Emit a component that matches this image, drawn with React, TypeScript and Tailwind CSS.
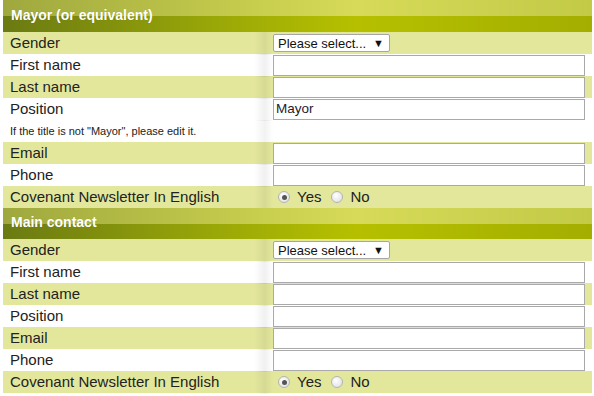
import React from "react"

type Row =
  | { kind: "select"; label: string }
  | { kind: "text"; label: string; value?: string }
  | { kind: "note"; text: string }
  | { kind: "radio"; label: string }

const mayorRows: Row[] = [
  { kind: "select", label: "Gender" },
  { kind: "text", label: "First name" },
  { kind: "text", label: "Last name" },
  { kind: "text", label: "Position", value: "Mayor" },
  { kind: "note", text: 'If the title is not "Mayor", please edit it.' },
  { kind: "text", label: "Email" },
  { kind: "text", label: "Phone" },
  { kind: "radio", label: "Covenant Newsletter In English" },
]

const contactRows: Row[] = [
  { kind: "select", label: "Gender" },
  { kind: "text", label: "First name" },
  { kind: "text", label: "Last name" },
  { kind: "text", label: "Position" },
  { kind: "text", label: "Email" },
  { kind: "text", label: "Phone" },
  { kind: "radio", label: "Covenant Newsletter In English" },
]

function SectionHeader({ title, tall }: { title: string; tall?: boolean }) {
  return (
    <div className={`relative flex flex-col ${tall ? "h-[32px]" : "h-[31px]"}`}>
      <div className="flex-1 bg-[linear-gradient(to_right,#9fa83e,#c9cf4e_45%,#d6da58_60%,#c3ca46)]" />
      <div className="flex-1 bg-[linear-gradient(to_right,#6a7a12,#98a608_35%,#b6c000_60%,#a3ae00)]" />
      <div className="absolute inset-0 flex items-center pl-[8px] pb-[2px] text-[14px] font-bold text-white [text-shadow:0_0_1px_rgba(0,0,0,0.15)]">
        {title}
      </div>
    </div>
  )
}

function Radio({ checked }: { checked?: boolean }) {
  return (
    <span className="inline-flex w-[12px] h-[12px] rounded-full border border-[#b4b4b4] bg-[radial-gradient(circle_at_40%_35%,#ffffff,#dcdcdc)] items-center justify-center">
      {checked && <span className="w-[5px] h-[5px] rounded-full bg-[#555]" />}
    </span>
  )
}

function FormRow({ row, shaded }: { row: Row; shaded: boolean }) {
  const bg = shaded ? "bg-[#e3e79c]" : "bg-white"

  if (row.kind === "note") {
    return (
      <div className={`grid grid-cols-[270px_1fr] h-[22px] ${bg}`}>
        <div className="flex items-center pl-[7px] text-[11px] text-[#222] bg-[linear-gradient(to_right,transparent_93%,rgba(0,0,0,0.05)_97%,transparent)]">
          {row.text}
        </div>
        <div />
      </div>
    )
  }

  return (
    <div className={`grid grid-cols-[270px_1fr] h-[22px] ${bg}`}>
      <div className="flex items-center pl-[7px] text-[15px] text-[#222] bg-[linear-gradient(to_right,transparent_93%,rgba(0,0,0,0.06)_97%,transparent)]">
        {row.label}
      </div>
      <div className="flex items-center pr-[7px]">
        {row.kind === "select" && (
          <div className="flex items-center justify-between w-[117px] h-[18px] bg-white border border-[#a6a6a6] rounded-[2px] pl-[4px] pr-[5px] text-[13px] text-[#111]">
            <span>Please select...</span>
            <span className="text-[11px]">▼</span>
          </div>
        )}
        {row.kind === "text" && (
          <div className="flex items-center w-full h-[21px] bg-white border border-[#a9a9a9] pl-[2px] text-[13.5px] text-[#1e1a2e]">
            {row.value}
          </div>
        )}
        {row.kind === "radio" && (
          <div className="flex items-center pl-[5px] text-[15px] text-[#222]">
            <Radio checked />
            <span className="ml-[7px]">Yes</span>
            <span className="ml-[10px] flex"><Radio /></span>
            <span className="ml-[7px]">No</span>
          </div>
        )}
      </div>
    </div>
  )
}

function Section({ title, rows, tall }: { title: string; rows: Row[]; tall?: boolean }) {
  let shade = true
  return (
    <div>
      <SectionHeader title={title} tall={tall} />
      {rows.map((row, i) => {
        const shaded = row.kind === "note" ? false : shade
        if (row.kind !== "note") shade = !shade
        return <FormRow key={i} row={row} shaded={shaded} />
      })}
    </div>
  )
}

export default function App() {
  return (
    <div className="w-[594px] h-[396px] overflow-hidden bg-white font-['Liberation_Sans',Arial,sans-serif]">
      <div className="ml-[3px] w-[589px]">
        <Section title="Mayor (or equivalent)" rows={mayorRows} tall />
        <Section title="Main contact" rows={contactRows} />
      </div>
    </div>
  )
}
